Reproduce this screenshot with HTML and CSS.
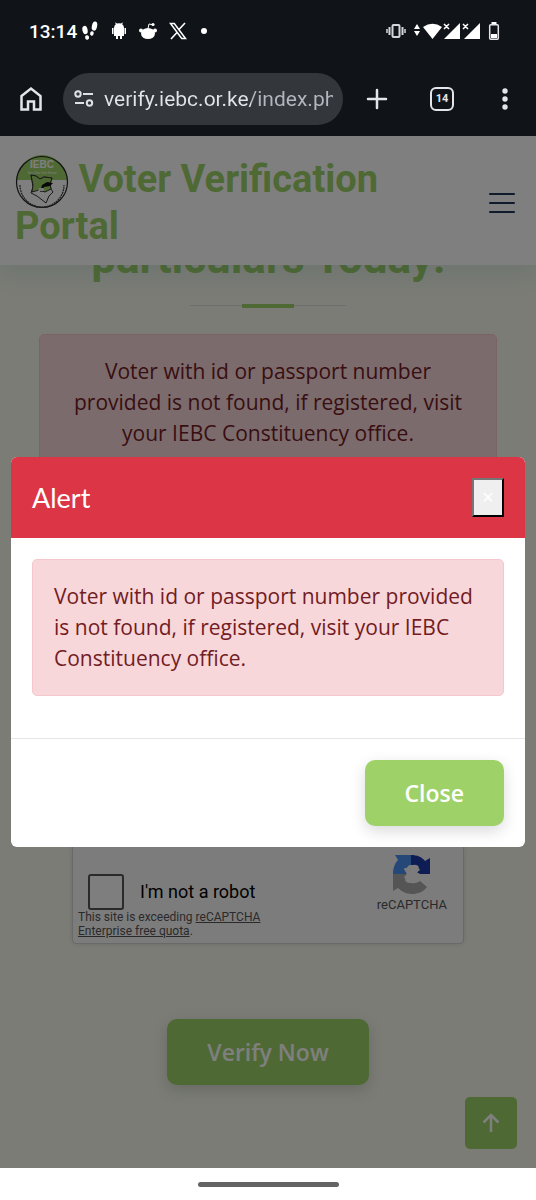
FILE: index.html
```html
<!DOCTYPE html>
<html lang="en">
<head>
  <meta charset="UTF-8">
  <meta name="viewport" content="width=device-width, initial-scale=1.0">
  <title>Voter Verification Portal</title>
  <link rel="stylesheet" href="styles.css">
</head>
<body>
  <div class="status-bar">
    <span class="clock">13:14</span>
    <div class="status-icons">
      <svg width="18" height="20" viewBox="0 0 18 20" fill="#fff">
        <ellipse cx="4" cy="9" rx="2.600" ry="4.200" transform="rotate(-12 4 9)"/>
        <ellipse cx="6" cy="16.500" rx="2" ry="2.200" transform="rotate(-12 6 16)"/>
        <ellipse cx="13.500" cy="5" rx="2.600" ry="4.600" transform="rotate(12 13 5)"/>
        <ellipse cx="11" cy="12.500" rx="1.800" ry="2.300" transform="rotate(12 11 12)"/>
      </svg>
      <svg width="16" height="18" viewBox="0 0 16 18" fill="#fff">
        <path d="M3 6a5 5 0 0 1 2-4L4 1l.6-.6L6 1.500a6 6 0 0 1 4 0L11.400.4 12 1l-1 1a5 5 0 0 1 2 4v8h-2v3H9v-3H7v3H5v-3H3zM1 6h1.500v6H1zM13.500 6H15v6h-1.500z"/>
      </svg>
      <svg width="18" height="18" viewBox="0 0 18 18" fill="#fff">
        <ellipse cx="9" cy="11.500" rx="7" ry="5.500"/>
        <circle cx="2" cy="8.500" r="2"/><circle cx="16" cy="8.500" r="2"/>
        <circle cx="14" cy="2.500" r="1.600"/>
        <path d="M9 6.500l1-4.500 4 .8" fill="none" stroke="#fff"/>
      </svg>
      <svg width="18" height="18" viewBox="0 0 18 18" fill="none" stroke="#fff">
        <path d="M1.500 1.500h3.800l11.200 15h-3.800z" stroke-width="1.500"/>
        <path d="M16 1l-6.500 7M8 10.500L2 17" stroke-width="1.600"/>
      </svg>
      <svg width="8" height="18" viewBox="0 0 8 18" fill="#fff"><circle cx="5" cy="9" r="3"/></svg>
    </div>
    <div class="signal-icons">
      <svg class="vibrate" width="20" height="18" viewBox="0 0 20 18" fill="none" stroke="#d4d6da">
        <rect x="6.500" y="3" width="7" height="12" rx="1" stroke-width="2"/>
        <path d="M3.500 5v8M16.500 5v8" stroke-width="2"/><path d="M1 7v4M19 7v4" stroke-width="1.500"/>
      </svg>
      <svg width="68" height="20" viewBox="0 0 68 20" fill="#fff">
        <path d="M0 8l3-5 3 5zM0 10h6l-3 5z"/>
        <path d="M9 6q9.500-6.500 19 0l-9.500 12z"/>
        <path d="M46 2v16H30zM66 2v16H50z"/>
        <path d="M30 3l5 5M35 3l-5 5M49 3l5 5M54 3l-5 5" stroke="#fff" stroke-width="1.500"/>
      </svg>
      <svg width="12" height="20" viewBox="0 0 12 20">
        <rect x="1.700" y="3.700" width="8.600" height="14.600" rx="1" fill="none" stroke="#e3e5e8" stroke-width="1.500"/>
        <path d="M3.500 1h5v2h-5zM3 13h6v4H3z" fill="#fff"/>
      </svg>
    </div>
  </div>

  <div class="toolbar">
    <button class="tool" type="button" aria-label="Home">
      <svg width="24" height="26" viewBox="0 0 24 26" fill="none" stroke="#e3e5ea" stroke-width="2.500">
        <path d="M2.500 10L12 2.500 21.500 10v13.500H15v-8H9v8H2.500z"/>
      </svg>
    </button>
    <div class="address">
      <svg width="20" height="18" viewBox="0 0 20 18" fill="none" stroke="#dfe1e6" stroke-width="2">
        <circle cx="4" cy="4" r="2.700"/><path d="M9 4h10M1 13h9"/><circle cx="15.500" cy="13" r="2.700"/>
      </svg>
      <input class="url" type="text" aria-label="Address" value="verify.iebc.or.ke/index.php">
    </div>
    <button class="tool" type="button" aria-label="New tab">
      <svg width="22" height="22" viewBox="0 0 22 22" stroke="#e3e5ea" stroke-width="2.500" stroke-linecap="round"><path d="M11 2v18M2 11h18"/></svg>
    </button>
    <button class="tool" type="button" aria-label="Tabs"><span class="tab-count">14</span></button>
    <button class="tool" type="button" aria-label="Menu">
      <svg width="6" height="24" viewBox="0 0 6 24" fill="#e3e5ea"><circle cx="3" cy="4" r="2.700"/><circle cx="3" cy="12" r="2.700"/><circle cx="3" cy="20" r="2.700"/></svg>
    </button>
  </div>

  <div class="page">
    <header class="header">
      <a class="brand" href="#">
        <svg class="logo" width="54" height="54" viewBox="0 0 54 54">
          <circle cx="27" cy="27" r="25.500" fill="#fff"/>
          <path d="M2 25a25 25 0 0 1 50 0z" fill="#9ed269"/>
          <circle cx="27" cy="27" r="25.500" fill="none" stroke="#222" stroke-width="1.200"/>
          <text x="27" y="13" class="logo-name">IEBC</text>
          <text x="27" y="19" class="logo-motto">Your Vote Your Future</text>
          <path d="M16 20l5 1 4 3 4-2 8 1-2 6 1 5 2 3-4 4-3 7-9-7-6-3 2-6-1-6z" fill="#fff" stroke="#333"/>
          <path d="M16 20l5 1 4 3 4-2 8 1-2 6 1 5-6 3-6-2-7 2 1-7z" fill="#9ed269" stroke="#333"/>
          <path d="M27 30l5-3 6 1-3 3-6 1-1 4-3 1z" fill="#111"/><path d="M24 33h5v3h-6z" fill="#eee"/>
          <path d="M5 30a22 22 0 0 0 44 0" fill="none" stroke="#444" stroke-width="1.300" stroke-dasharray="2 .6"/>
        </svg>
        Voter Verification Portal
      </a>
      <button class="menu" type="button" aria-label="Open menu">
        <svg width="26" height="22" viewBox="0 0 26 22" stroke="#1f3557" stroke-width="2" stroke-linecap="round"><path d="M1 2h24M1 11h24M1 20h24"/></svg>
      </button>
    </header>

    <main class="verify">
      <h2 class="section-title">particulars Today!</h2>
      <div class="alert alert-center">Voter with id or passport number provided is not found, if registered, visit your IEBC Constituency office.</div>
      <div class="captcha">
        <div class="captcha-check">
          <label><input type="checkbox"> I'm not a robot</label>
          <p>This site is exceeding <a href="#">reCAPTCHA Enterprise free quota</a>.</p>
        </div>
        <div class="captcha-brand">
          <svg width="39" height="41" viewBox="0 0 39 41">
            <path d="M3 1h16v10c-3 0-4 2-4 4l-3-1 3 6H1C1 14 3 9 6 6z" fill="#4a90f0"/>
            <path d="M19 1c6 0 11 2 14 6l5-3v16H23l5-4c-2-4-5-5-9-5z" fill="#1c3aa9"/>
            <path d="M1 20h14l-3 3c2 3 4 5 7 6 4 1 7-1 9-2l7 6c-4 5-9 7-15 7-6 0-11-3-14-6l-5 3z" fill="#ababab"/>
            <path d="M15 20l-3-5q2-2 5-1l2 2 2-5q4-1 6 2l-4 4 5 3-2 4-5-1-3 6q-4 0-5-3l2-4z" fill="#f9f9f9"/>
          </svg>
          <span>reCAPTCHA</span>
        </div>
      </div>
      <button class="btn" type="button">Verify Now</button>
    </main>

    <a class="back-to-top" href="#" aria-label="Back to top">
      <svg width="20" height="22" viewBox="0 0 20 22" fill="none" stroke="#fff" stroke-width="2.500"><path d="M10 20V3M2.500 10.500L10 3l7.500 7.500"/></svg>
    </a>

    <div class="backdrop">
      <div class="modal" role="dialog" aria-labelledby="modal-title">
        <div class="modal-header">
          <h5 id="modal-title">Alert</h5>
          <button class="close" type="button" aria-label="Close">&times;</button>
        </div>
        <div class="modal-body">
          <div class="alert">Voter with id or passport number provided is not found, if registered, visit your IEBC Constituency office.</div>
        </div>
        <div class="modal-footer">
          <button class="btn" type="button">Close</button>
        </div>
      </div>
    </div>
  </div>

  <div class="nav-bar"><span class="nav-handle"></span></div>
</body>
</html>
```
FILE: styles.css
```css
* {
  box-sizing: border-box;
}
body {
  margin: 0;
  min-height: 100vh;
  display: flex;
  flex-direction: column;
  font-family: "Open Sans", sans-serif;
  font-size: 21px;
  line-height: 31px;
  color: #444;
  background: #fff;
}
button {
  font-family: inherit;
  cursor: pointer;
}

/* phone status bar */
.status-bar {
  height: 62px;
  padding: 0 36px 0 29px;
  display: flex;
  align-items: center;
  background: #101419;
  color: #fff;
}
.clock {
  font-family: Roboto, sans-serif;
  font-size: 19px;
  font-weight: 500;
}
.status-icons {
  flex: 1;
  margin-left: 4px;
  display: flex;
  align-items: center;
  gap: 12px;
}
.signal-icons {
  display: flex;
  align-items: center;
}
.vibrate {
  margin-right: 8px;
}
.signal-icons svg:last-child {
  margin-left: 6px;
}

/* browser toolbar */
.toolbar {
  height: 74px;
  padding: 0 10px;
  display: flex;
  align-items: center;
  background: #101419;
}
.tool {
  width: 42px;
  height: 52px;
  padding: 0;
  display: flex;
  align-items: center;
  justify-content: center;
  border: 0;
  background: none;
}
.address {
  flex: 1;
  min-width: 0;
  height: 52px;
  margin: 0 13px 0 11px;
  padding: 0 10px 0 11px;
  display: flex;
  align-items: center;
  gap: 10px;
  border-radius: 26px;
  background: #33363b;
}
.address svg {
  flex: none;
}
.url {
  flex: 1;
  min-width: 0;
  padding: 0;
  border: 0;
  font-family: Roboto, sans-serif;
  font-size: 21px;
  color: #c9cbd1;
  background: linear-gradient(to right, #e3e5ea 64%, #b4b7bf 64%) text;
  -webkit-text-fill-color: transparent;
}
.toolbar .tool:nth-of-type(3) {
  margin: 0 21px 0 23px;
}
.tab-count {
  width: 24px;
  height: 24px;
  border: 2px solid #e3e5ea;
  border-radius: 6px;
  font-family: Roboto, sans-serif;
  font-size: 11px;
  font-weight: 700;
  line-height: 20px;
  color: #e3e5ea;
}

/* web page */
.page {
  position: relative;
  flex: 1;
  display: flex;
  flex-direction: column;
  overflow: hidden;
  background: #f4f8ea;
}
.header {
  z-index: 1;
  padding: 20px 21px 15px 15px;
  display: flex;
  align-items: center;
  gap: 32px;
  background: #fff;
  box-shadow: 0 2px 30px rgba(20, 100, 140, 0.15);
}
.brand {
  flex: 1;
  font-family: Roboto, sans-serif;
  font-size: 38px;
  font-weight: 700;
  line-height: 47px;
  color: #9ed269;
  text-decoration: none;
}
.logo {
  margin: -6px 0;
  vertical-align: middle;
}
.logo-name {
  font: 700 10px "Liberation Sans", sans-serif;
  fill: #fff;
  text-anchor: middle;
}
.logo-motto {
  font: 3px "Liberation Sans", sans-serif;
  fill: #fff;
  text-anchor: middle;
}
.menu {
  padding: 0;
  display: flex;
  border: 0;
  background: none;
}
.verify {
  padding: 0 39px 83px;
  display: flex;
  flex-direction: column;
  align-items: center;
}
.section-title {
  margin: -33px 0 26px;
  padding-bottom: 24px;
  position: relative;
  font-family: Roboto, sans-serif;
  font-size: 44px;
  line-height: 52px;
  color: #9ed269;
}
.section-title::before,
.section-title::after {
  content: "";
  position: absolute;
  left: 50%;
  transform: translateX(-50%);
}
.section-title::before {
  width: 156px;
  height: 1px;
  bottom: 2px;
  background: #ddd;
}
.section-title::after {
  width: 52px;
  height: 4px;
  bottom: 0;
  background: #9ed269;
}
.alert {
  padding: 21px;
  border: 1px solid #f5c6cb;
  border-radius: 5px;
  background: #f8d7da;
  color: #721c24;
}
.alert-center {
  width: 100%;
  padding: 21px 32px;
  text-align: center;
}
.captcha {
  width: 392px;
  max-width: 100%;
  margin: 373px 0 75px;
  padding: 9px 16px 5px 5px;
  display: flex;
  justify-content: space-between;
  border: 1px solid #d3d3d3;
  border-radius: 4px;
  background: #f9f9f9;
  box-shadow: 0 0 5px rgba(0, 0, 0, 0.1);
  font-family: Roboto, sans-serif;
}
.captcha-check {
  width: 210px;
  padding-top: 20px;
}
.captcha label {
  display: flex;
  align-items: center;
  gap: 16px;
  font-size: 18px;
  line-height: 34px;
  color: #000;
}
.captcha input {
  appearance: none;
  width: 36px;
  height: 36px;
  margin: 0 0 0 10px;
  border: 2px solid #555;
  border-radius: 3px;
  background: #fcfcfc;
}
.captcha p {
  margin: 0;
  font-size: 12px;
  line-height: 14px;
  color: #555;
}
.captcha p a {
  color: inherit;
}
.captcha-brand {
  display: flex;
  flex-direction: column;
  align-items: center;
  font-size: 13px;
  line-height: 20px;
  color: #555;
}
.btn {
  padding: 16px 40px;
  border: 0;
  border-radius: 10px;
  background: #9ed269;
  box-shadow: 0 5px 15px rgba(0, 0, 0, 0.15);
  font-size: 23px;
  font-weight: 600;
  line-height: 34px;
  color: #fff;
}
.back-to-top {
  position: absolute;
  right: 19px;
  bottom: 19px;
  width: 52px;
  height: 52px;
  display: flex;
  align-items: center;
  justify-content: center;
  border-radius: 5px;
  background: #9ed269;
}

/* alert dialog */
.backdrop {
  position: absolute;
  inset: 0;
  z-index: 2;
  padding: 321px 11px 0;
  background: rgba(0, 0, 0, 0.5);
}
.modal {
  overflow: hidden;
  border-radius: 6px;
  background: #fff;
}
.modal-header {
  padding: 21px;
  display: flex;
  align-items: center;
  justify-content: space-between;
  background: #dc3545;
  color: #fff;
}
.modal-header h5 {
  margin: 0;
  font-family: Lato, sans-serif;
  font-size: 27px;
  font-weight: 400;
}
.close {
  width: 32px;
  height: 39px;
  padding: 0;
  border: 2px solid;
  border-color: #767676 #000 #000 #767676;
  background: #efefef;
  font-size: 21px;
  line-height: 31px;
  color: #fff;
}
.modal-body {
  padding: 21px 21px 42px;
}
.modal-footer {
  padding: 21px;
  display: flex;
  justify-content: flex-end;
  border-top: 1px solid #e5e5e5;
}

/* gesture bar */
.nav-bar {
  height: 32px;
  display: flex;
  align-items: center;
  justify-content: center;
}
.nav-handle {
  width: 141px;
  height: 5px;
  border-radius: 3px;
  background: #646464;
}
```
